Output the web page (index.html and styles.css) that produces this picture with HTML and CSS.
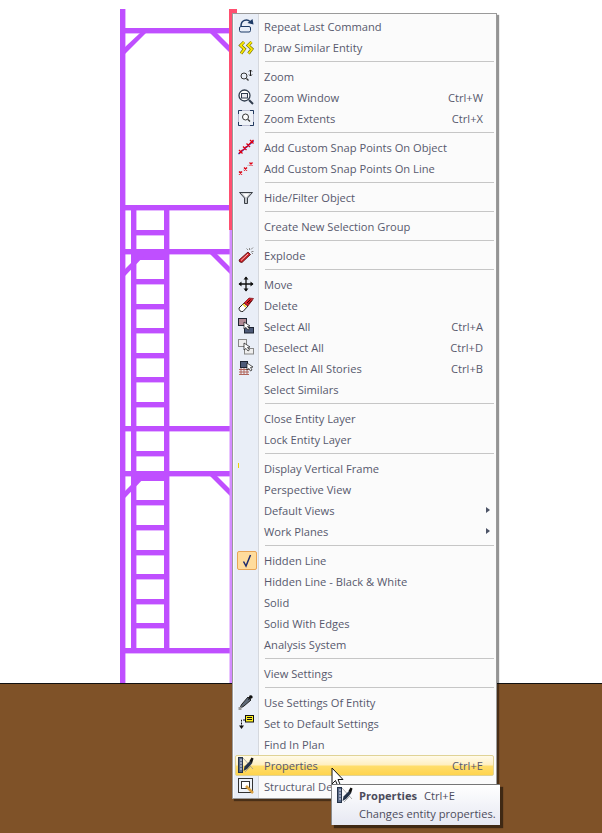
FILE: index.html
```html
<!DOCTYPE html>
<html lang="en">
<head>
<meta charset="utf-8">
<title>Context menu</title>
<link rel="stylesheet" href="styles.css">
</head>
<body>
<div class="stage">
  <svg class="drawing" width="602" height="833" viewBox="0 0 602 833">
    <g fill="#bf4fff">
      <rect x="120" y="9" width="5.400" height="674"/>
      <rect x="120" y="28" width="111" height="5.400"/>
      <rect x="120" y="205" width="111" height="5.400"/>
      <rect x="120" y="249" width="111" height="5.400"/>
      <rect x="120" y="426" width="111" height="5.400"/>
      <rect x="120" y="471" width="111" height="5.400"/>
      <rect x="120" y="648" width="111" height="5.400"/>
      <rect x="131" y="205" width="5.400" height="445"/>
      <rect x="164" y="205" width="5.400" height="445"/>
      <rect x="131" y="249" width="38" height="11"/>
      <rect x="131" y="471" width="38" height="10"/>
      <rect x="136" y="230" width="28" height="5.400"/>
      <rect x="136" y="279" width="28" height="5.400"/>
      <rect x="136" y="304" width="28" height="5.400"/>
      <rect x="136" y="328" width="28" height="5.400"/>
      <rect x="136" y="353" width="28" height="5.400"/>
      <rect x="136" y="377" width="28" height="5.400"/>
      <rect x="136" y="402" width="28" height="5.400"/>
      <rect x="136" y="451" width="28" height="5.400"/>
      <rect x="136" y="500" width="28" height="5.400"/>
      <rect x="136" y="525" width="28" height="5.400"/>
      <rect x="136" y="550" width="28" height="5.400"/>
      <rect x="136" y="574" width="28" height="5.400"/>
      <rect x="136" y="599" width="28" height="5.400"/>
      <rect x="136" y="623" width="28" height="5.400"/>
      <polygon points="125,47 140,33 146,33 125,54"/>
      <polygon points="210,33 217,33 232,48 232,55"/>
      <polygon points="125,269 140,254 146,254 125,276"/>
      <polygon points="210,254 217,254 232,269 232,276"/>
      <polygon points="125,491 140,476 146,476 125,498"/>
      <polygon points="210,476 217,476 232,491 232,498"/>
    </g>
    <rect x="229.500" y="230" width="2.500" height="453" fill="#d48cff"/>
    <rect x="229" y="9" width="3" height="221" fill="#ff4f70"/>
    <rect x="229" y="9" width="8" height="5" fill="#ff4f70"/>
  </svg>
  <div class="ground"></div>

  <div class="menu">
    <div class="gutter"></div>

    <div class="item"><span class="ico"><svg width="16" height="16" viewBox="0 0 16 16"><rect x="1.500" y="8.500" width="11" height="5.500" rx="1.500" fill="#e8eef8" stroke="#1d3a66"/><path d="M3 8 C3 2 9 0.500 12 3.500" fill="none" stroke="#1d3a66" stroke-width="1.500"/><path d="M9.500 5 L15.500 6.500 L14.500 1Z" fill="#1d3a66"/></svg></span><span class="label">Repeat Last Command</span></div>
    <div class="item"><span class="ico"><svg width="16" height="16" viewBox="0 0 16 16"><path d="M6 3 L2.500 6.500 L6.500 10 L3 14.500 M13.500 3 L10 6.500 L14 10 L10.500 14.500" fill="none" stroke="#6b6b10" stroke-width="3"/><path d="M6 3 L2.500 6.500 L6.500 10 L3 14.500 M13.500 3 L10 6.500 L14 10 L10.500 14.500" fill="none" stroke="#fbe800" stroke-width="1.800"/></svg></span><span class="label">Draw Similar Entity</span></div>
    <div class="sep"></div>

    <div class="item"><span class="ico"><svg width="16" height="16" viewBox="0 0 16 16"><circle cx="6" cy="8" r="3" fill="none" stroke="#333"/><path d="M8.500 10.500 L10.500 12.500" stroke="#333" stroke-width="1.300"/><path d="M12.500 2 V8 M11 3.500 L12.500 2 L14 3.500 M11 6.500 L12.500 8 L14 6.500" fill="none" stroke="#222"/></svg></span><span class="label">Zoom</span></div>
    <div class="item"><span class="ico"><svg width="16" height="16" viewBox="0 0 16 16"><circle cx="6.500" cy="6.500" r="5.500" fill="#fff" stroke="#2f3b4c" stroke-width="1.300"/><rect x="3.500" y="4.500" width="6" height="4.500" fill="#e9e9f0" stroke="#2f3b4c"/><path d="M11 11 L15 15" stroke="#2f3b4c" stroke-width="2"/></svg></span><span class="label">Zoom Window</span><span class="key">Ctrl+W</span></div>
    <div class="item"><span class="ico"><svg width="16" height="16" viewBox="0 0 16 16"><rect x="0.500" y="0.500" width="15" height="15" fill="#eef2f8" stroke="#88a" stroke-dasharray="1 1"/><path d="M0.500 4 V0.500 H4 M12 0.500 H15.500 V4 M15.500 12 V15.500 H12 M4 15.500 H0.500 V12" fill="none" stroke="#223a60"/><circle cx="7.500" cy="7" r="3" fill="#fff" stroke="#333"/><path d="M10 9.500 L12 11.500" stroke="#333" stroke-width="1.300"/></svg></span><span class="label">Zoom Extents</span><span class="key">Ctrl+X</span></div>
    <div class="sep"></div>

    <div class="item"><span class="ico"><svg width="16" height="16" viewBox="0 0 16 16"><path d="M0.500 15 L15.500 2" stroke="#1a2fd0" stroke-width="1.400"/><path d="M1 11 L4.500 14.500 M1 14.500 L4.500 11 M5 7.500 L8.500 11 M5 11 L8.500 7.500 M8.500 4.500 L12 8 M8.500 8 L12 4.500 M12 1 L15.500 4.500 M12 4.500 L15.500 1" stroke="#e00012" stroke-width="1.300"/></svg></span><span class="label">Add Custom Snap Points On Object</span></div>
    <div class="item"><span class="ico"><svg width="16" height="16" viewBox="0 0 16 16"><path d="M1 13 L3 11 M5.500 9.500 L7 8 M9.500 6 L11 4.500" stroke="#aaa"/><path d="M1 11.500 L4 14.500 M1 14.500 L4 11.500 M6 7.500 L9 10.500 M6 10.500 L9 7.500 M11.500 2.500 L14.500 5.500 M11.500 5.500 L14.500 2.500" stroke="#e00012" stroke-width="1.300"/></svg></span><span class="label">Add Custom Snap Points On Line</span></div>
    <div class="sep"></div>

    <div class="item"><span class="ico"><svg width="16" height="16" viewBox="0 0 16 16"><path d="M1.500 3.500 H14.500 L9.500 9 V14.500 H6.500 V9Z" fill="#bfc3c8" stroke="#3a3f46"/><path d="M4.500 4.500 H11.500 L8 8.500Z" fill="#fff"/></svg></span><span class="label">Hide/Filter Object</span></div>
    <div class="sep"></div>

    <div class="item"><span class="label">Create New Selection Group</span></div>
    <div class="sep"></div>

    <div class="item"><span class="ico"><svg width="16" height="16" viewBox="0 0 16 16"><path d="M1 13 L10 5 L12.500 7.500 L4 15.500 Q1 15.500 1 13Z" fill="#cf2027" stroke="#4a0d10" stroke-width="0.800"/><path d="M3 13.500 L10 7" stroke="#f8c0c0"/><path d="M11.500 1 V3 M15 0.500 L13 2.500 M15.500 4.500 H13.500 M8.500 1.500 L10 3 M15 7 L13.500 5.500" stroke="#888"/></svg></span><span class="label">Explode</span></div>
    <div class="sep"></div>

    <div class="item"><span class="ico"><svg width="16" height="16" viewBox="0 0 16 16"><path d="M8 1 V15 M1 8 H15" stroke="#111" stroke-width="1.300"/><path d="M8 0.500 L5.500 3.500 H10.500Z M8 15.500 L5.500 12.500 H10.500Z M0.500 8 L3.500 5.500 V10.500Z M15.500 8 L12.500 5.500 V10.500Z" fill="#111"/></svg></span><span class="label">Move</span></div>
    <div class="item"><span class="ico"><svg width="16" height="16" viewBox="0 0 16 16"><path d="M1 11 L6 6 L10 9 L5 14.500 Q1 15 1 11Z" fill="#fff" stroke="#222"/><path d="M6 6 L11 1 L15.500 1.500 L10 9Z" fill="#d8202a" stroke="#701015" stroke-width="0.700"/><path d="M5 7 L8 10" stroke="#f0d020" stroke-width="1.500"/><path d="M9 6 L12.500 2.500 M10.500 7 L14 3.500" stroke="#400"/></svg></span><span class="label">Delete</span></div>
    <div class="item"><span class="ico"><svg width="16" height="16" viewBox="0 0 16 16"><rect x="0.500" y="0.500" width="8" height="7" fill="#b08a94" stroke="#1e2533"/><rect x="6.500" y="9.500" width="9" height="5.500" fill="#4d5a78" stroke="#1e2533"/><path d="M6 4 L6 11 L8 9.500 L10 12 L11.500 11 L9.500 8.500 L12 8Z" fill="#fff" stroke="#111" stroke-width="0.700"/></svg></span><span class="label">Select All</span><span class="key">Ctrl+A</span></div>
    <div class="item"><span class="ico"><svg width="16" height="16" viewBox="0 0 16 16"><rect x="0.500" y="0.500" width="8" height="7" fill="#eee" stroke="#888"/><rect x="6.500" y="9.500" width="9" height="5.500" fill="#eee" stroke="#888"/><path d="M6 4 L6 11 L8 9.500 L10 12 L11.500 11 L9.500 8.500 L12 8Z" fill="#fff" stroke="#111" stroke-width="0.700"/></svg></span><span class="label">Deselect All</span><span class="key">Ctrl+D</span></div>
    <div class="item"><span class="ico"><svg width="16" height="16" viewBox="0 0 16 16"><path d="M1 9.500 H11 M1 12 H11 M1 14.500 H11 M3 7 V15 M6 7 V15 M9 9 V15" stroke="#b0655a"/><rect x="2.500" y="1.500" width="7" height="6" fill="#4d5a78" stroke="#1e2533"/><path d="M9 3 L9 10 L11 8.500 L12.500 11 L14 10 L12.500 7.500 L15 7Z" fill="#fff" stroke="#111" stroke-width="0.700"/></svg></span><span class="label">Select In All Stories</span><span class="key">Ctrl+B</span></div>
    <div class="item"><span class="label">Select Similars</span></div>
    <div class="sep"></div>

    <div class="item"><span class="label">Close Entity Layer</span></div>
    <div class="item"><span class="label">Lock Entity Layer</span></div>
    <div class="sep"></div>

    <div class="item"><span class="ico"><svg width="16" height="16" viewBox="0 0 16 16"><rect x="0" y="3" width="1" height="5" fill="#f0d000"/></svg></span><span class="label">Display Vertical Frame</span></div>
    <div class="item"><span class="label">Perspective View</span></div>
    <div class="item"><span class="label">Default Views</span><span class="arrow"></span></div>
    <div class="item"><span class="label">Work Planes</span><span class="arrow"></span></div>
    <div class="sep"></div>

    <div class="item"><span class="check"><svg width="12" height="14" viewBox="0 0 12 14"><path d="M2.500 7.500 L5 12 L9.500 1" fill="none" stroke="#1d2a6e" stroke-width="1.500"/></svg></span><span class="label">Hidden Line</span></div>
    <div class="item"><span class="label">Hidden Line - Black &amp; White</span></div>
    <div class="item"><span class="label">Solid</span></div>
    <div class="item"><span class="label">Solid With Edges</span></div>
    <div class="item"><span class="label">Analysis System</span></div>
    <div class="sep"></div>

    <div class="item"><span class="label">View Settings</span></div>
    <div class="sep"></div>

    <div class="item"><span class="ico"><svg width="16" height="16" viewBox="0 0 16 16"><path d="M10 3 L13 6 L6 12 L3.500 13.500 L2.500 12.500 L4 10Z" fill="#5e6a78" stroke="#222"/><path d="M10 6 L11.500 1.500 Q15 0.500 14.500 4 Z" fill="#111"/><rect x="0.500" y="13" width="3" height="3" fill="#999"/></svg></span><span class="label">Use Settings Of Entity</span></div>
    <div class="item"><span class="ico"><svg width="16" height="16" viewBox="0 0 16 16"><rect x="7.500" y="0.500" width="8" height="6.500" fill="#ffef20" stroke="#111"/><path d="M9 2.500 H14 M9 4.500 H14" stroke="#111"/><path d="M7 5 H3.500 V11" fill="none" stroke="#111" stroke-dasharray="2 1"/><path d="M1 10.500 H6 L3.500 14Z" fill="#111"/></svg></span><span class="label">Set to Default Settings</span></div>
    <div class="item"><span class="label">Find In Plan</span></div>
    <div class="item active"><span class="ico"><svg width="16" height="16" viewBox="0 0 16 16"><use href="#prop"/></svg></span><span class="label">Properties</span><span class="key">Ctrl+E</span></div>
    <div class="item"><span class="ico"><svg width="16" height="16" viewBox="0 0 16 16"><rect x="0.500" y="0.500" width="14" height="14" fill="#eef2f8" stroke="#333"/><rect x="3.500" y="3.500" width="8" height="7" fill="#fff" stroke="#333"/><path d="M8 8 L15 15" stroke="#d9a040" stroke-width="2.500"/></svg></span><span class="label">Structural Design</span></div>
  </div>

  <svg class="cursor" width="14" height="22" viewBox="0 0 14 22"><path d="M1 1 V17 L4.500 13.500 L7 19.500 L9.500 18.500 L7 12.500 H12Z" fill="#fff" stroke="#111"/></svg>

  <div class="tip">
    <div class="tip-head">
      <svg width="16" height="16" viewBox="0 0 16 16"><symbol id="prop" viewBox="0 0 16 16"><rect x="0.500" y="0.500" width="4" height="15" fill="#5a6a88" stroke="#26344a"/><path d="M2 3 H4 M2 6 H4 M2 9 H4 M2 12 H4" stroke="#dde"/><path d="M5 1 L15 12 M7 15 L13 9" stroke="#999" stroke-width="0.800"/><path d="M5.500 14 L6.500 9.500 L12 4 L14 6.500 L9 12Z" fill="#26344a"/><path d="M11.500 4 L13.500 0.500 L15.500 1.500 L14 6.500Z" fill="#111"/></symbol><use href="#prop"/></svg>
      <span class="tip-title">Properties</span>
      <span class="tip-key">Ctrl+E</span>
    </div>
    <div class="tip-desc">Changes entity properties.</div>
  </div>
</div>
</body>
</html>
```

FILE: styles.css
```css
* { box-sizing: border-box; }
html, body { margin: 0; padding: 0; }
body { background: #fff; overflow: hidden; font-family: "Open Sans", "Noto Sans", sans-serif; }

.stage { position: relative; width: 602px; height: 833px; overflow: hidden; background: #fff; }
.drawing { position: absolute; left: 0; top: 0; display: block; }
.ground { position: absolute; left: 0; right: 0; top: 683px; bottom: 0; background: #7f5228; border-top: 1px solid #111; }

.menu {
  position: absolute; left: 232px; top: 13px; width: 265px; height: 786px;
  padding: 2px 2px 2px 1px;
  background: #fbfbfb;
  border: 1px solid #9a9a9a;
  box-shadow: 2px 2px 1px rgba(0,0,0,.42);
  font-size: 11.150px; color: #57596d;
}
.gutter { position: absolute; left: 1px; top: 0; bottom: 0; width: 25px; background: #e9eef7; border-right: 1px solid #d5d8de; }

.item { position: relative; display: flex; align-items: center; height: 21px; padding-left: 30px; padding-right: 11px; }
.label { flex: 1; white-space: nowrap; }
.key { white-space: nowrap; }
.ico { position: absolute; left: 4px; top: 2px; width: 16px; height: 16px; }
.ico svg { display: block; }
.arrow { position: absolute; right: 4px; top: 7px; width: 0; height: 0; border-left: 4px solid #4c5366; border-top: 3.500px solid transparent; border-bottom: 3.500px solid transparent; }

.sep { height: 8px; margin-left: 31px; margin-right: 0; padding-top: 3px; }
.sep::before { content: ""; display: block; height: 1px; background: #c6c6c6; }

.check { position: absolute; left: 3px; top: 1px; width: 20px; height: 19px; display: flex; align-items: center; justify-content: center; background: #ffdc9c; border: 1px solid #e8a556; border-radius: 2px; }

.active { background: linear-gradient(#fffbea 0%, #ffefc0 48%, #ffde6c 52%, #ffd44e 100%); border: 1px solid #e0d396; border-radius: 2px; margin-left: 1px; padding-left: 28px; padding-right: 10px; }
.active .ico { left: 2px; top: 1px; }

.cursor { position: absolute; left: 331px; top: 767px; display: block; }

.tip {
  position: absolute; left: 331px; top: 784px; width: 169px; height: 41px;
  padding: 2px 5px 0 5px;
  background: linear-gradient(#ffffff, #e6e8f2);
  border-top: 1px solid #767676;
  border-left: 1px solid #8a8a8a;
  box-shadow: 3px 3px 1px rgba(0,0,0,.5);
  font-size: 11.150px; color: #4c4c5c;
  white-space: nowrap;
}
.tip-head { display: flex; align-items: center; height: 16px; }
.tip-head svg { display: block; margin-right: 6px; }
.tip-title { font-weight: 700; margin-right: 7px; }
.tip-desc { margin-top: 3px; padding-left: 22px; }
```
